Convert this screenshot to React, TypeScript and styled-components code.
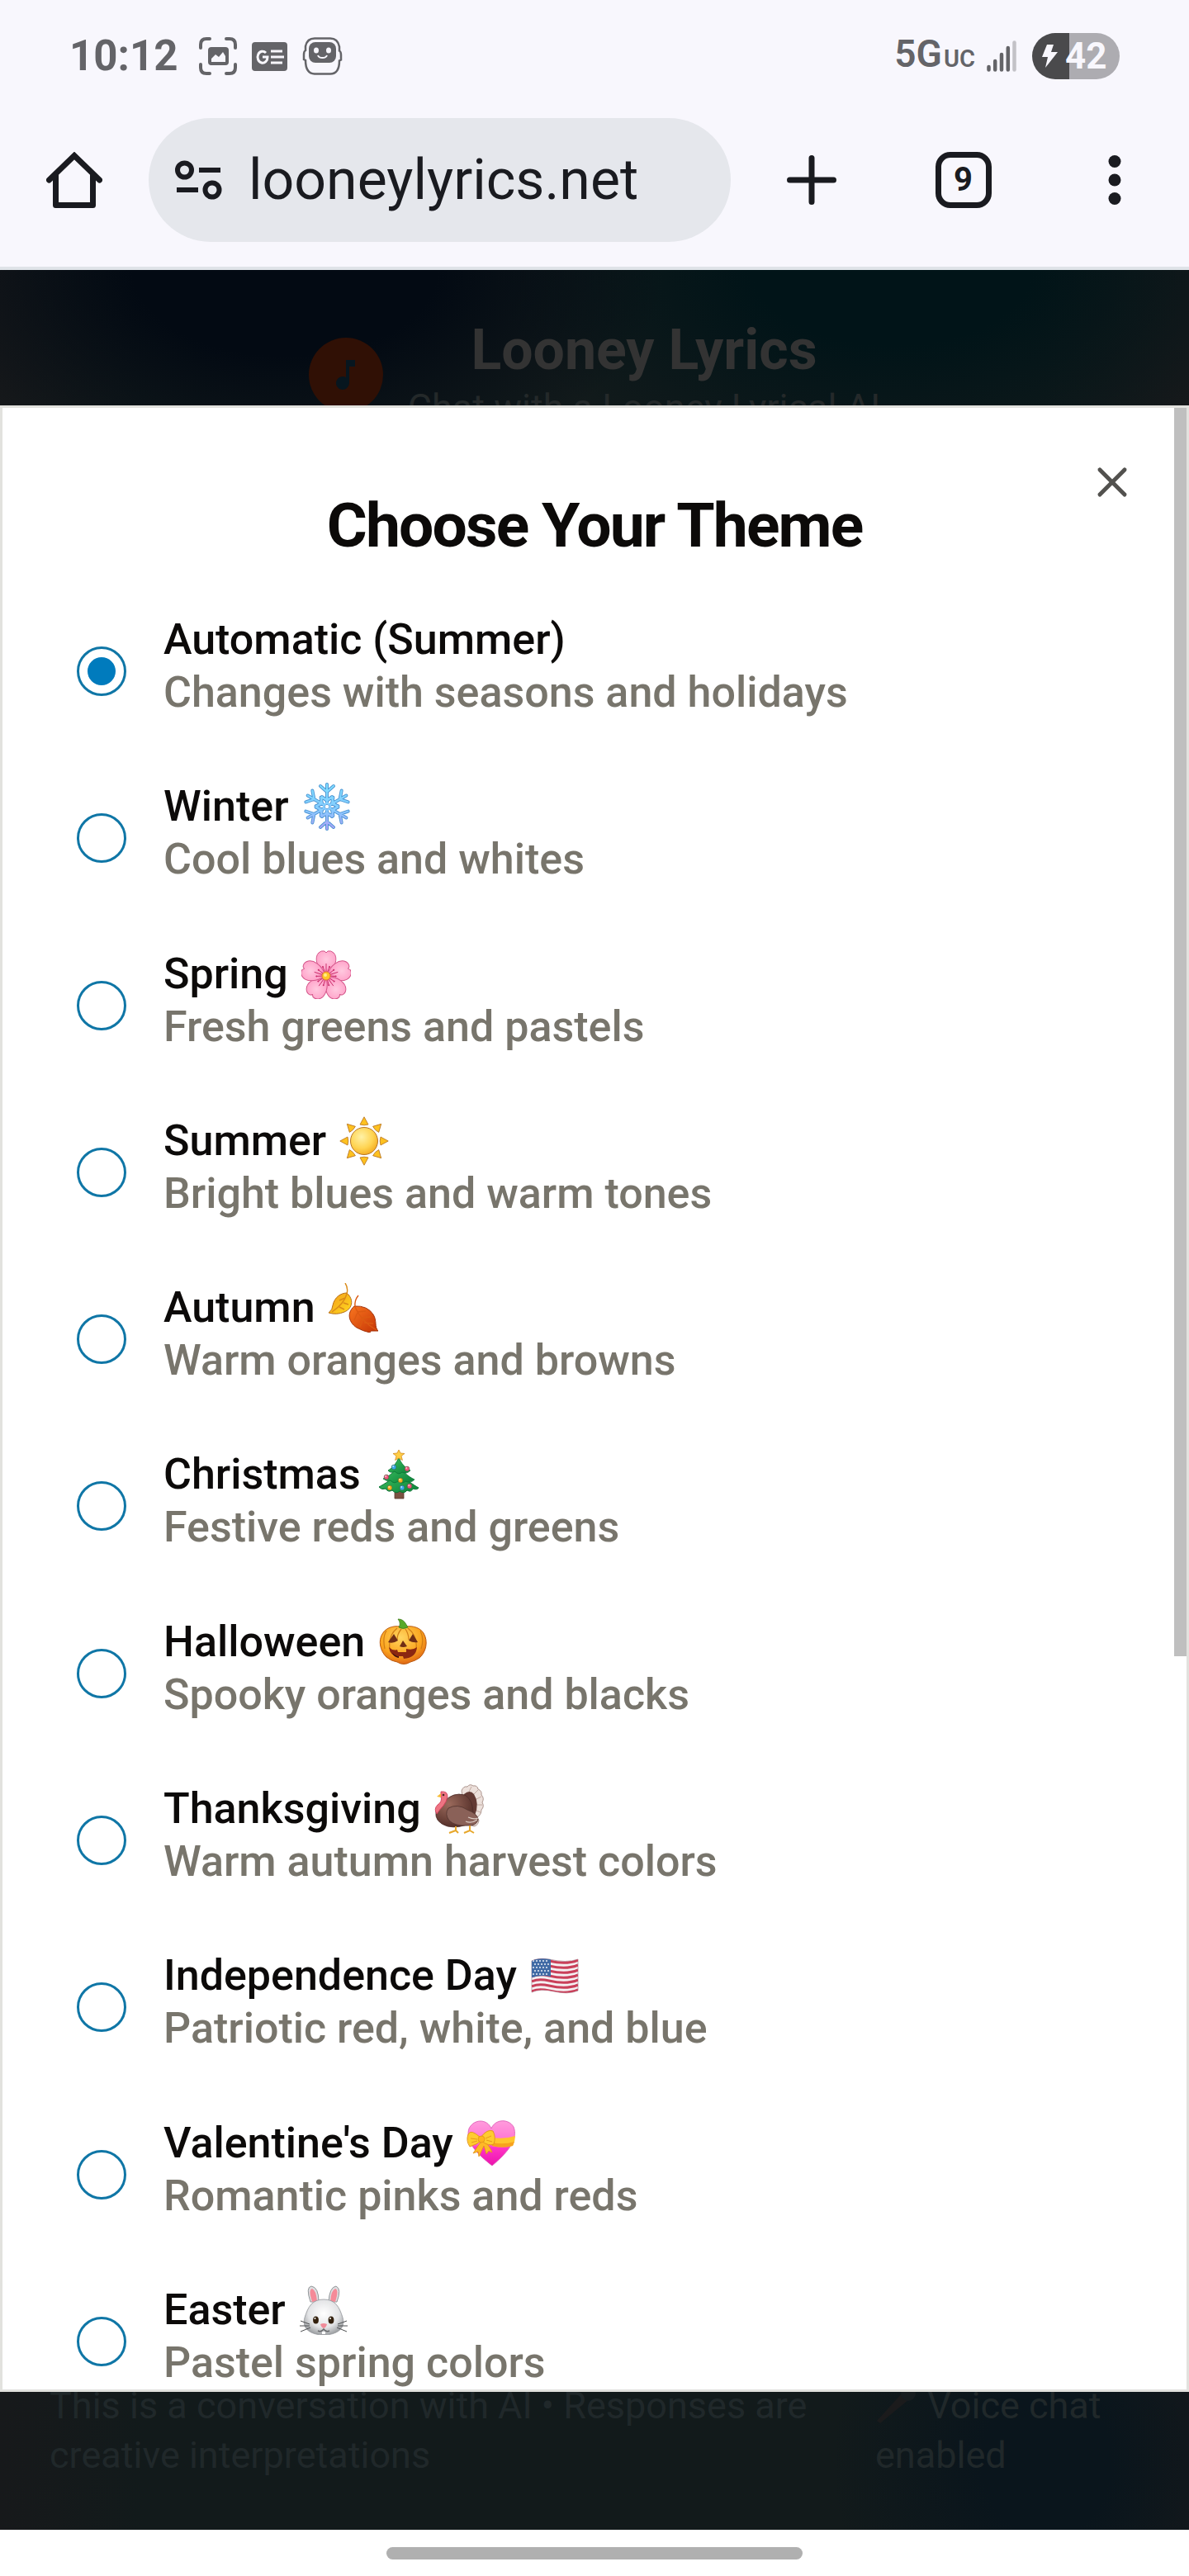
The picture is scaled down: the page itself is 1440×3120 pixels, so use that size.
import React, { useState } from "react";
import styled, { createGlobalStyle } from "styled-components";
import { X } from "lucide-react";

const GlobalStyle = createGlobalStyle`
  *, *::before, *::after { box-sizing: border-box; }
  body { margin: 0; background: #ffffff; }
  button, input { font: inherit; color: inherit; }
`;

const Screen = styled.div`
  display: flex;
  flex-direction: column;
  min-height: 100vh;
  font-family: Roboto, "Liberation Sans", sans-serif;
`;

/* ---------- system status bar and browser toolbar ---------- */

const Chrome = styled.header`
  display: flex;
  flex-direction: column;
  background: #f8f7fd;
  border-bottom: 4px solid #dfe3e8;
`;

const StatusBar = styled.div`
  display: flex;
  align-items: center;
  justify-content: space-between;
  padding: 40px 84px 0;
  height: 96px;
  color: #646468;
`;

const StatusGroup = styled.div<{ $gap: number }>`
  display: flex;
  align-items: center;
  gap: ${(p) => p.$gap}px;
`;

const Clock = styled.time`
  font-size: 51px;
  line-height: 56px;
  font-weight: 700;
  margin-right: 8px;
`;

const Network = styled.span`
  font-size: 46px;
  line-height: 56px;
  font-weight: 600;
  small {
    font-size: 29px;
    margin-left: 2px;
  }
`;

const Battery = styled.span`
  display: flex;
  align-items: center;
  gap: 9px;
  width: 106px;
  height: 56px;
  margin-left: 5px;
  padding-left: 11px;
  border-radius: 28px;
  background: linear-gradient(90deg, #4a4a4c 42%, #adacb1 42%);
  color: #f8f7fd;
  font-size: 44px;
  line-height: 56px;
  font-weight: 700;
`;

const Toolbar = styled.nav`
  display: flex;
  align-items: center;
  gap: 56px;
  padding: 47px 56px 30px;
`;

const ToolButton = styled.button`
  display: grid;
  place-items: center;
  width: 68px;
  height: 68px;
  padding: 0;
  border: 0;
  background: none;
  color: #1a1b20;
`;

const TabsButton = styled(ToolButton)`
  border: 7px solid #1a1b20;
  border-radius: 18px;
  font-size: 40px;
  line-height: 40px;
  font-weight: 700;
`;

const ToolGroup = styled.div`
  display: flex;
  align-items: center;
  justify-content: space-between;
  width: 443px;
  padding-left: 8px;
`;

const Address = styled.label`
  display: flex;
  align-items: center;
  gap: 32px;
  flex: 1;
  min-width: 0;
  height: 150px;
  padding: 0 32px;
  border-radius: 75px;
  background: #e5e7ec;
  color: #1a1b20;
`;

const AddressInput = styled.input`
  flex: 1;
  min-width: 0;
  padding: 0;
  border: 0;
  outline: 0;
  background: none;
  font-size: 68px;
  line-height: 80px;
`;

/* ---------- dimmed page behind the dialog ---------- */

const Page = styled.main`
  position: relative;
  flex: 1;
  display: flex;
  flex-direction: column;
  justify-content: space-between;
  background:
    radial-gradient(ellipse 460px 260px at 24% 0%, #030a13 40%, transparent),
    radial-gradient(ellipse 480px 260px at 75% 0%, #011418 35%, transparent),
    radial-gradient(ellipse 260px 300px at 88% 97%, #0a151c 30%, transparent),
    linear-gradient(90deg, #17191b, #121a1b 12%, #121a1b 88%, #17191b);
`;

const SiteHeader = styled.div`
  display: flex;
  align-items: center;
  justify-content: center;
  gap: 30px;
  padding-top: 57px;
  text-align: center;
`;

const Logo = styled.span`
  display: grid;
  place-items: center;
  width: 90px;
  height: 90px;
  border-radius: 50%;
  background: #301005;
`;

const SiteTitle = styled.h1`
  margin: 0;
  font-size: 68px;
  line-height: 80px;
  font-weight: 700;
  color: #333333;
`;

const SiteTagline = styled.p`
  margin: 0;
  font-size: 45px;
  line-height: 60px;
  color: #24292a;
`;

const SiteFooter = styled.footer`
  display: flex;
  gap: 60px;
  padding: 0 60px 60px;
  font-size: 45px;
  line-height: 60px;
  color: #20282a;
  p { margin: 0; flex: 1; }
  p:last-child { flex: 0 0 320px; }
  svg { vertical-align: -8px; }
`;

/* ---------- theme dialog ---------- */

const Dialog = styled.section`
  position: absolute;
  inset: 164px 0 167px;
  display: flex;
  flex-direction: column;
  padding: 105px 90px 0;
  border: 3px solid #e2e2de;
  background: #ffffff;
  overflow: hidden;
`;

const DialogTitle = styled.h2`
  margin: 0 0 69px;
  font-size: 75px;
  line-height: 75px;
  font-weight: 700;
  letter-spacing: -0.025em;
  text-align: center;
  color: #0c0a09;
`;

const CloseButton = styled.button`
  position: absolute;
  top: 60px;
  right: 60px;
  display: flex;
  padding: 0;
  border: 0;
  background: none;
  color: #52514e;
`;

const ScrollThumb = styled.div`
  position: absolute;
  top: 0;
  right: 0;
  width: 15px;
  height: 63%;
  background: #bfbfbf;
`;

const ThemeList = styled.div`
  flex: 1;
  display: flex;
  flex-direction: column;
  justify-content: space-between;
`;

const ThemeRow = styled.label`
  display: flex;
  align-items: flex-start;
  gap: 45px;
  font-size: 52px;
  line-height: 64px;
  font-weight: 500;
  color: #0c0a09;
`;

const Radio = styled.input`
  appearance: none;
  display: grid;
  place-items: center;
  flex: none;
  width: 60px;
  height: 60px;
  margin: 40px 0 0;
  border: 3px solid #0f76a6;
  border-radius: 50%;
  &:checked::before {
    content: "";
    width: 34px;
    height: 34px;
    border-radius: 50%;
    background: #007bbd;
  }
`;

const ThemeName = styled.span`
  display: flex;
  align-items: center;
  gap: 16px;
  height: 64px;
`;

const ThemeNote = styled.span`
  display: block;
  color: #78756c;
`;

const GestureBar = styled.div`
  display: flex;
  justify-content: center;
  padding: 21px 0 20px;
  background: #ffffff;
  &::before {
    content: "";
    width: 35%;
    height: 15px;
    border-radius: 8px;
    background: #b0b0b0;
  }
`;

/* ---------- emoji drawings, all on a 60-unit square ---------- */

const Emoji = ({ label, children }: { label: string; children: React.ReactNode }) => (
  <svg width="60" height="60" viewBox="0 0 60 60" role="img" aria-label={label}>
    {children}
  </svg>
);

const turns = (n: number) => Array.from({ length: n }, (_, i) => (360 / n) * i);

const flakeArm = "M30 26V3M22 5l8 7 8-7M30 23l-6-5M30 23l6-5M24 19l-2 7M36 19l2 7";
const Snowflake = () => (
  <Emoji label="Snowflake">
    <defs>
      <linearGradient id="flake" x1="0" y1="0" x2="0" y2="60" gradientUnits="userSpaceOnUse">
        <stop offset="0" stopColor="#7fe0ff" />
        <stop offset="0.55" stopColor="#85ccff" />
        <stop offset="1" stopColor="#b49cf5" />
      </linearGradient>
      <mask id="flakeShape">
        {turns(6).map((a) => (
          <path key={a} d={flakeArm} transform={`rotate(${a} 30 30)`} fill="none" stroke="#fff" strokeWidth="2.2" strokeLinecap="round" />
        ))}
        <circle cx="30" cy="30" r="4" fill="none" stroke="#fff" strokeWidth="2" />
      </mask>
    </defs>
    {turns(6).map((a) => (
      <path key={a} d={flakeArm} transform={`rotate(${a} 30 30)`} fill="none" stroke="#4a93d2" strokeWidth="4" strokeLinecap="round" />
    ))}
    <rect width="60" height="60" fill="url(#flake)" mask="url(#flakeShape)" />
  </Emoji>
);

const Blossom = () => (
  <Emoji label="Cherry blossom">
    <defs>
      <radialGradient id="petal" cx="30" cy="12" r="20" gradientUnits="userSpaceOnUse">
        <stop offset="0" stopColor="#ffc9df" />
        <stop offset="0.6" stopColor="#ffa6cb" />
        <stop offset="1" stopColor="#ee5f9b" />
      </radialGradient>
    </defs>
    {turns(5).map((a) => (
      <g key={a} transform={`rotate(${a} 30 32)`}>
        <path d="M30 31C19 24 15 10 21 4Q24 1 28 2L30 4L32 2Q36 1 39 4C45 10 41 24 30 31Z" fill="url(#petal)" stroke="#d4568a" strokeWidth="1" />
        <path d="M30 29V17M29 29L26 21M31 29L34 21" stroke="#c92a69" strokeWidth="0.9" />
        <circle cx="26" cy="21" r="1" fill="#c92a69" />
        <circle cx="34" cy="21" r="1" fill="#c92a69" />
      </g>
    ))}
    <circle cx="30" cy="32" r="5" fill="#ffc629" stroke="#e07b3c" strokeWidth="1" />
    <circle cx="29" cy="31" r="2" fill="#ffee8a" />
  </Emoji>
);

const Sun = () => (
  <Emoji label="Sun">
    <defs>
      <radialGradient id="sun" cx="0.4" cy="0.35" r="0.7">
        <stop offset="0" stopColor="#fff1a6" />
        <stop offset="0.6" stopColor="#ffd452" />
        <stop offset="1" stopColor="#f3a91c" />
      </radialGradient>
    </defs>
    {turns(8).map((a) => (
      <path key={a} d="M30 .8L35 10Q30 11.6 25 10Z" transform={`rotate(${a} 30 30)`} fill="#fdc11f" stroke="#bd7a25" strokeWidth="0.9" />
    ))}
    <circle cx="30" cy="30" r="16.5" fill="url(#sun)" stroke="#b7752a" strokeWidth="1" />
  </Emoji>
);

const Leaves = () => (
  <Emoji label="Fallen leaves">
    <defs>
      <linearGradient id="leafA" x1="0" y1="0" x2="1" y2="1">
        <stop offset="0" stopColor="#f39a1c" />
        <stop offset="1" stopColor="#ffdb1f" />
      </linearGradient>
      <linearGradient id="leafB" x1="0" y1="0" x2="1" y2="1">
        <stop offset="0" stopColor="#f9761f" />
        <stop offset="1" stopColor="#c43305" />
      </linearGradient>
    </defs>
    <path d="M22 12C31 20 29 31 19 35Q10 39 0 36Q5 32 5 27C7 17 15 12 22 12Z" fill="url(#leafA)" stroke="#b56d16" strokeWidth="1" />
    <path d="M20 0Q24 6 22 13Q19 25 4 35M20 18l-7 3M18 24l6 2M13 29l6 3" fill="none" stroke="#d98a18" strokeWidth="1.4" />
    <path d="M31 28C21 37 25 48 34 54Q41 58 50 60L51 58L60 58C55 53 59 46 54 38Q47 27 31 28Z" fill="url(#leafB)" stroke="#a3330b" strokeWidth="1" />
    <path d="M36 15Q31 21 32 29Q39 46 58 57M35 35l10-1M39 42l12-1M43 48l11 1M35 36l-4 9M41 44l-3 9" fill="none" stroke="#dc5a12" strokeWidth="1.4" />
  </Emoji>
);

const Tree = () => (
  <Emoji label="Christmas tree">
    <defs>
      <linearGradient id="tree" x1="0" y1="0" x2="1" y2="1">
        <stop offset="0" stopColor="#3fc463" />
        <stop offset="1" stopColor="#0a8038" />
      </linearGradient>
    </defs>
    <path d="M25 49h11v10H25z" fill="#7b5142" stroke="#5c3a30" strokeWidth="0.8" />
    <path d="M30 27C22 36 13 41 6 45Q9 49 14 47Q17 52 22 49Q27 54 31 50Q36 54 40 49Q45 52 47 47Q52 49 54 46C47 42 38 36 30 27Z" fill="url(#tree)" stroke="#087332" strokeWidth="1" />
    <path d="M30 18C25 27 18 32 11 35Q16 39 20 37Q24 42 29 38Q34 42 38 38Q44 41 49 36C41 32 35 27 30 18Z" fill="url(#tree)" stroke="#087332" strokeWidth="0.8" />
    <path d="M30 9C27 17 22 22 17 25Q20 29 25 26Q30 31 34 27Q39 30 44 25C37 21 33 17 30 9Z" fill="url(#tree)" stroke="#087332" strokeWidth="0.8" />
    <path d="M30 0l2 4 5 .5-4 3 1.400 5L30 10l-4.400 2.500 1.400-5-4-3 5-.5Z" fill="#ffce45" stroke="#d38b20" strokeWidth="0.8" />
    {[
      [24, 21, "#3ba9ea"], [40, 23, "#f0567f"], [15, 33, "#f0567f"], [32, 37, "#ffb21f"],
      [19, 46, "#ffb21f"], [34, 46, "#3ba9ea"], [43, 44, "#f0567f"],
    ].map(([x, y, c]) => (
      <g key={`${x}-${y}`}>
        <circle cx={x} cy={y} r="2.900" fill={c as string} stroke="#335b35" strokeWidth="0.5" />
        <circle cx={Number(x) - 0.8} cy={Number(y) - 1} r="0.9" fill="#fff" opacity="0.7" />
      </g>
    ))}
  </Emoji>
);

const Pumpkin = () => (
  <Emoji label="Jack-o-lantern">
    <defs>
      <radialGradient id="pumpkin" cx="0.45" cy="0.3" r="0.75">
        <stop offset="0" stopColor="#ffd561" />
        <stop offset="0.6" stopColor="#fba51f" />
        <stop offset="1" stopColor="#d95a12" />
      </radialGradient>
    </defs>
    <path d="M30 12C38 9 50 11 55 19C61 29 58 42 50 49Q44 53 39 54Q31 59 23 54Q16 53 10 48C2 40 0 28 5 20C10 11 22 9 30 12Z" fill="url(#pumpkin)" stroke="#bb5c13" strokeWidth="1" />
    <path d="M23 13C14 20 13 30 14 38M36 13C45 20 47 30 46 38M28 14Q23 20 23 27M33 14Q37 20 37 27M10 16Q5 24 8 38M51 16Q56 26 52 38" fill="none" stroke="#cf7c16" strokeWidth="1.2" />
    <path d="M24 2Q30 2 33 7L36 12Q30 15 25 12Q28 7 24 2Z" fill="#58a928" stroke="#3f7b1a" strokeWidth="0.8" />
    <path d="M19 20L24 28Q18 32 12 30ZM42 20L48 30Q42 31 37 28ZM30 28L35 35Q30 37 26 35Z" fill="#702e15" />
    <path d="M13 36Q18 41 23 39L24 42H34L34 38Q42 40 47 36Q46 49 31 50L30 47H25L25 49Q14 46 13 36Z" fill="#8b2711" />
    <path d="M17 43Q23 48 25 47L25 49Q19 48 17 43Z" fill="#3f120c" />
  </Emoji>
);

const Turkey = () => (
  <Emoji label="Turkey">
    <defs>
      <radialGradient id="turkey" cx="0.35" cy="0.3" r="0.8">
        <stop offset="0" stopColor="#9b6a5c" />
        <stop offset="1" stopColor="#4c2823" />
      </radialGradient>
    </defs>
    <path d="M33 8Q35 2 40 3Q43-1 47 2Q52 1 53 6Q58 8 57 13Q61 17 58 22Q61 27 57 31Q57 37 52 40L54 44Q53 50 48 51L40 48Z" fill="#ece0db" stroke="#a48a82" strokeWidth="0.9" />
    <path d="M36 12Q43 6 48 12Q55 23 49 38L40 40Z" fill="#633a34" />
    <path d="M42 9l3-6M48 12l5-5M51 18l6-3M52 25h6M51 32l5 2" stroke="#b69c93" strokeWidth="0.8" />
    <path d="M11 22Q22 9 37 13Q47 19 47 35L43 47Q30 54 16 51Q0 46 2 33Z" fill="url(#turkey)" stroke="#4c2c28" strokeWidth="0.8" />
    <path d="M17 29Q28 23 40 31Q53 36 53 43Q51 51 40 50Q25 51 18 44Q12 36 17 29Z" fill="#8a6158" stroke="#573731" strokeWidth="0.9" />
    <path d="M38 45Q45 48 52 43M41 40Q48 43 53 41" fill="none" stroke="#dacac3" strokeWidth="1.3" />
    <path d="M8 9Q16 8 16 15Q15 21 11 26Q7 30 3 36Q-1 30 4 25Q10 21 8 15Z" fill="#ee7482" stroke="#cf405a" strokeWidth="0.9" />
    <path d="M8 11L3 15L8 16Z" fill="#f8bc35" />
    <circle cx="11" cy="13" r="1.3" fill="#472523" />
    <path d="M26 51V57M18 59L26 56L29 59M43 50V56M36 59L43 56L48 59" fill="none" stroke="#e7a72b" strokeWidth="2" />
  </Emoji>
);

const stripe = (y: number) => `M2 ${y}Q10 ${y - 4} 23 ${y - 1}Q44 ${y + 4} 58 ${y - 2}`;
const Flag = () => (
  <Emoji label="Flag of the United States">
    <defs>
      <clipPath id="flag">
        <path d="M2 12Q10 8 23 10Q44 15 58 10V48Q46 53 29 49Q12 45 2 50Z" />
      </clipPath>
    </defs>
    <path d="M2 12Q10 8 23 10Q44 15 58 10V48Q46 53 29 49Q12 45 2 50Z" fill="#f5f0f2" stroke="#b9a5af" strokeWidth="1" />
    <g clipPath="url(#flag)">
      {[13, 19, 25, 31, 37, 43, 49].map((y) => (
        <path key={y} d={stripe(y)} fill="none" stroke="#c9405a" strokeWidth="3" />
      ))}
      <path d="M0 8H25V31Q12 28 0 33Z" fill="#416ba5" />
      {[13, 17, 21, 25, 29].map((y, r) =>
        [4, 8, 12, 16, 20].map((x) => <circle key={`${x}-${y}`} cx={x + (r % 2) * 2} cy={y - 1} r="0.9" fill="#fff" />)
      )}
    </g>
  </Emoji>
);

const Heart = () => (
  <Emoji label="Heart with ribbon">
    <defs>
      <linearGradient id="heart" x1="0" y1="0" x2="0" y2="1">
        <stop offset="0" stopColor="#ff9bdc" />
        <stop offset="0.5" stopColor="#ff70d3" />
        <stop offset="0.6" stopColor="#ff35c5" />
        <stop offset="1" stopColor="#ec13ad" />
      </linearGradient>
    </defs>
    <path d="M30 12C35 0 51 0 57 10C63 25 50 41 31 57C13 43-2 28 3 12C9 0 25 0 30 12Z" fill="url(#heart)" stroke="#db54b4" strokeWidth="0.8" />
    <path d="M31 23Q47 25 59 21Q59 27 56 33Q43 36 31 33Z" fill="#ffc52d" />
    <path d="M31 29Q45 32 58 28L56 33Q43 36 31 33Z" fill="#f7a21e" />
    <path d="M16 30L8 42L14 40L15 46L21 33L24 43L27 39L31 41Q28 32 20 27Z" fill="#ffb827" stroke="#e09119" strokeWidth="0.8" />
    <path d="M17 23Q5 12 2 19Q-1 27 4 34Q13 31 18 27Q27 34 33 31Q36 22 32 15Q25 12 17 23Z" fill="#ffcb2f" stroke="#e09119" strokeWidth="0.9" />
    <circle cx="18" cy="25" r="4" fill="#ffb41f" stroke="#df8f19" strokeWidth="0.7" />
    <path d="M5 24l8 1M30 21l-7 3M6 29l7-2M31 28l-7-2" stroke="#e69a1b" strokeWidth="1" />
  </Emoji>
);

const Bunny = () => (
  <Emoji label="Rabbit face">
    <defs>
      <radialGradient id="bunny" cx="0.5" cy="0.4" r="0.65">
        <stop offset="0" stopColor="#ffffff" />
        <stop offset="0.6" stopColor="#e3e4e6" />
        <stop offset="1" stopColor="#8f9295" />
      </radialGradient>
    </defs>
    <path d="M14 20Q8 2 15 1Q24 2 24 20ZM36 20Q37 2 45 1Q52 4 46 20Z" fill="#dedfe1" stroke="#929598" strokeWidth="1" />
    <path d="M16 20Q11 5 16 4Q21 6 22 19ZM38 19Q39 6 44 4Q49 5 44 20Z" fill="#f58a98" />
    <path d="M30 17C44 17 49 26 53 39C57 53 45 60 30 60C15 60 3 53 7 39C11 26 16 17 30 17Z" fill="url(#bunny)" stroke="#93969a" strokeWidth="0.8" />
    <ellipse cx="20.500" cy="42" rx="3.400" ry="4.500" fill="#33210e" />
    <ellipse cx="39" cy="42" rx="3.400" ry="4.500" fill="#33210e" />
    <circle cx="19.500" cy="40" r="1" fill="#fff" />
    <circle cx="38" cy="40" r="1" fill="#fff" />
    <path d="M26 47Q30 45 34 47Q33 51 30 52Q27 51 26 47Z" fill="#f08b99" />
    <path d="M23 55Q27 57 30 53Q33 57 37 55" fill="none" stroke="#66686b" strokeWidth="1.4" />
    <path d="M28 56h4v3h-4z" fill="#fff" />
    <path d="M2 43L13 47M1 49H13M2 56L14 51M58 43L47 47M59 49H47M58 56L46 51" stroke="#4e5052" strokeWidth="1" />
  </Emoji>
);

const THEMES: { id: string; name: string; note: string; Art?: () => React.ReactElement }[] = [
  { id: "auto", name: "Automatic (Summer)", note: "Changes with seasons and holidays" },
  { id: "winter", name: "Winter", note: "Cool blues and whites", Art: Snowflake },
  { id: "spring", name: "Spring", note: "Fresh greens and pastels", Art: Blossom },
  { id: "summer", name: "Summer", note: "Bright blues and warm tones", Art: Sun },
  { id: "autumn", name: "Autumn", note: "Warm oranges and browns", Art: Leaves },
  { id: "christmas", name: "Christmas", note: "Festive reds and greens", Art: Tree },
  { id: "halloween", name: "Halloween", note: "Spooky oranges and blacks", Art: Pumpkin },
  { id: "thanksgiving", name: "Thanksgiving", note: "Warm autumn harvest colors", Art: Turkey },
  { id: "independence", name: "Independence Day", note: "Patriotic red, white, and blue", Art: Flag },
  { id: "valentine", name: "Valentine's Day", note: "Romantic pinks and reds", Art: Heart },
  { id: "easter", name: "Easter", note: "Pastel spring colors", Art: Bunny },
];

/* ---------- system icons ---------- */

const CaptureIcon = () => (
  <svg width="46" height="46" viewBox="0 0 46 46" fill="none">
    <path d="M2 13V9Q2 2 9 2h4M33 2h4q7 0 7 7v4M44 33v4q0 7-7 7h-4M13 44H9q-7 0-7-7v-4" stroke="#646468" strokeWidth="4" strokeLinecap="round" />
    <rect x="11" y="12" width="25" height="22" rx="4" fill="#646468" />
    <path d="M15 30v-4l5-5 4 3 5-6 3 5v7Z" fill="#f8f7fd" />
  </svg>
);

const NewsIcon = () => (
  <svg width="43" height="35" viewBox="0 0 43 35" fill="none">
    <rect width="43" height="35" rx="4" fill="#646468" />
    <path d="M17 13a6 7 0 1 0 2 5h-6M23 11h14M23 18h16M23 25h14" stroke="#f8f7fd" strokeWidth="3" />
  </svg>
);

const RobotIcon = () => (
  <svg width="49" height="46" viewBox="0 0 49 46" fill="none">
    <path d="M15 1.500h19q9 0 11 10v5q2 1 2 5v6l-2 1q0 16-11 16H15Q4 44 4 28l-2-1v-6q0-4 2-5v-5q2-9.500 11-9.500Z" stroke="#646468" strokeWidth="2.500" />
    <rect x="8" y="6" width="33" height="25" rx="8" fill="#646468" />
    <ellipse cx="17" cy="16" rx="3" ry="3.500" fill="#f8f7fd" />
    <ellipse cx="32" cy="16" rx="3" ry="3.500" fill="#f8f7fd" />
    <path d="M19 22q1 3 5.500 3t5.500-3" stroke="#f8f7fd" strokeWidth="2" />
  </svg>
);

const SignalIcon = () => (
  <svg width="36" height="38" viewBox="0 0 36 38" strokeWidth="4.500" strokeLinecap="round" stroke="#646468">
    <path d="M2.500 32v3.500M10.200 25v10.500M18 17v18.500M25.800 9v26.500" />
    <path d="M33.500 2.500v33" stroke="#c3c2c7" />
  </svg>
);

const BoltIcon = () => (
  <svg width="20" height="30" viewBox="0 0 20 30">
    <path d="M7 1H15L12 10H20L5 29L8 16H1Z" fill="#f8f7fd" />
  </svg>
);

const HomeIcon = () => (
  <svg width="68" height="68" viewBox="0 0 68 68" fill="none" stroke="currentColor" strokeWidth="7" strokeLinejoin="round" strokeLinecap="round">
    <path d="M3.500 34L34 4.500L64.500 34" strokeLinejoin="miter" />
    <path d="M11.500 28V64.500H56.500V28" />
  </svg>
);

const TuneIcon = () => (
  <svg width="57" height="48" viewBox="0 0 57 48" fill="none" stroke="currentColor" strokeWidth="6">
    <circle cx="11.500" cy="12" r="8.500" />
    <path d="M29 12H55M2 36H28" />
    <circle cx="45" cy="36" r="8.500" />
  </svg>
);

const PlusIcon = () => (
  <svg width="60" height="60" viewBox="0 0 60 60" stroke="currentColor" strokeWidth="7" strokeLinecap="round">
    <path d="M30 3.500V56.500M3.500 30H56.500" />
  </svg>
);

const MoreIcon = () => (
  <svg width="16" height="60" viewBox="0 0 16 60" fill="currentColor">
    <circle cx="8" cy="7.500" r="7.500" />
    <circle cx="8" cy="30" r="7.500" />
    <circle cx="8" cy="52.500" r="7.500" />
  </svg>
);

const NoteIcon = () => (
  <svg width="24" height="38" viewBox="0 0 24 38" fill="#07161f">
    <path d="M12 1H23V9H16V29A8 8 0 1 1 12 22Z" />
  </svg>
);

const MicIcon = () => (
  <svg width="52" height="48" viewBox="0 0 52 48">
    <path d="M2 43L33 9L41 17L6 46Z" fill="#1b1b1c" />
    <circle cx="40" cy="10" r="9" fill="#171d20" />
  </svg>
);

export default function App() {
  const [theme, setTheme] = useState("auto");
  const [url, setUrl] = useState("looneylyrics.net");

  return (
    <Screen>
      <GlobalStyle />
      <Chrome>
        <StatusBar>
          <StatusGroup $gap={18}>
            <Clock>10:12</Clock>
            <CaptureIcon />
            <NewsIcon />
            <RobotIcon />
          </StatusGroup>
          <StatusGroup $gap={14}>
            <Network>5G<small>UC</small></Network>
            <SignalIcon />
            <Battery><BoltIcon />42</Battery>
          </StatusGroup>
        </StatusBar>
        <Toolbar>
          <ToolButton aria-label="Home"><HomeIcon /></ToolButton>
          <Address>
            <TuneIcon />
            <AddressInput aria-label="Address" value={url} onChange={(e) => setUrl(e.target.value)} />
          </Address>
          <ToolGroup>
            <ToolButton aria-label="New tab"><PlusIcon /></ToolButton>
            <TabsButton aria-label="Open tabs">9</TabsButton>
            <ToolButton aria-label="More options"><MoreIcon /></ToolButton>
          </ToolGroup>
        </Toolbar>
      </Chrome>

      <Page>
        <SiteHeader>
          <Logo><NoteIcon /></Logo>
          <div>
            <SiteTitle>Looney Lyrics</SiteTitle>
            <SiteTagline>Chat with a Looney Lyrical AI</SiteTagline>
          </div>
        </SiteHeader>
        <SiteFooter>
          <p>This is a conversation with AI • Responses are creative interpretations</p>
          <p><MicIcon /> Voice chat enabled</p>
        </SiteFooter>

        <Dialog role="dialog" aria-labelledby="dialog-title">
          <DialogTitle id="dialog-title">Choose Your Theme</DialogTitle>
          <ThemeList role="radiogroup" aria-labelledby="dialog-title">
            {THEMES.map(({ id, name, note, Art }) => (
              <ThemeRow key={id}>
                <Radio type="radio" name="theme" value={id} checked={theme === id} onChange={() => setTheme(id)} />
                <span>
                  <ThemeName>{name}{Art && <Art />}</ThemeName>
                  <ThemeNote>{note}</ThemeNote>
                </span>
              </ThemeRow>
            ))}
          </ThemeList>
          <CloseButton aria-label="Close"><X size={60} strokeWidth={2} /></CloseButton>
          <ScrollThumb />
        </Dialog>
      </Page>
      <GestureBar />
    </Screen>
  );
}
